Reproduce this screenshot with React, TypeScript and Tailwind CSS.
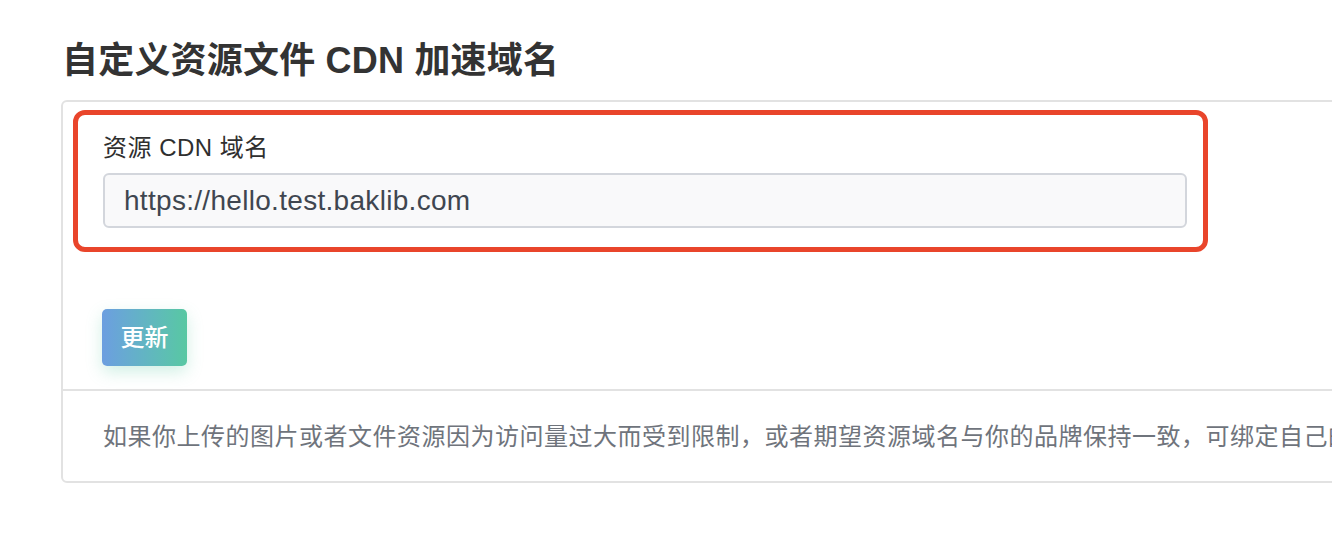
export default function App() {
  return (
    <div
      className="h-[546px] w-full overflow-hidden bg-white"
      style={{ fontFamily: '"Liberation Sans", "Noto Sans CJK SC", sans-serif' }}
    >
      <div className="pl-[61px] pt-[39px]">
        <h1 className="mb-[18px] pl-[1px] text-[36px] leading-[43px] font-semibold tracking-[0.2px] text-[#333333]">
          自定义资源文件 CDN 加速域名
        </h1>

        <div className="w-[1500px] rounded-[6px] border-2 border-[#e2e2e2]">
          <div className="pt-[8px] pl-[10px]">
            <div className="w-[1135px] rounded-[12px] border-[5px] border-[#e9452b] pt-[17px] pr-[16px] pb-[19px] pl-[25px]">
              <label className="block text-[24px] leading-[32px] tracking-[0.5px] text-[#2f2f2f]">
                资源 CDN 域名
              </label>
              <div className="mt-[9px] flex h-[55px] items-center rounded-[6px] border-2 border-[#d3d6dc] bg-[#f9f9fa] px-[19px]">
                <span className="text-[28px] tracking-[0.3px] text-[#3f4650]">
                  https://hello.test.baklib.com
                </span>
              </div>
            </div>
          </div>

          <div className="pt-[57px] pb-[23px] pl-[39px]">
            <button className="h-[57px] w-[85px] rounded-[5px] bg-gradient-to-r from-[#6c9ee0] to-[#58c8a2] text-[24px] font-medium text-white shadow-[0_6px_16px_rgba(88,200,162,0.28)]">
              更新
            </button>
          </div>

          <div className="border-t-2 border-[#e2e2e2] pt-[30px] pb-[28px] pl-[40px]">
            <p className="whitespace-nowrap text-[24px] leading-[32px] tracking-[0.5px] text-[#6f747c]">
              如果你上传的图片或者文件资源因为访问量过大而受到限制，或者期望资源域名与你的品牌保持一致，可绑定自己的域名。
            </p>
          </div>
        </div>
      </div>
    </div>
  )
}
